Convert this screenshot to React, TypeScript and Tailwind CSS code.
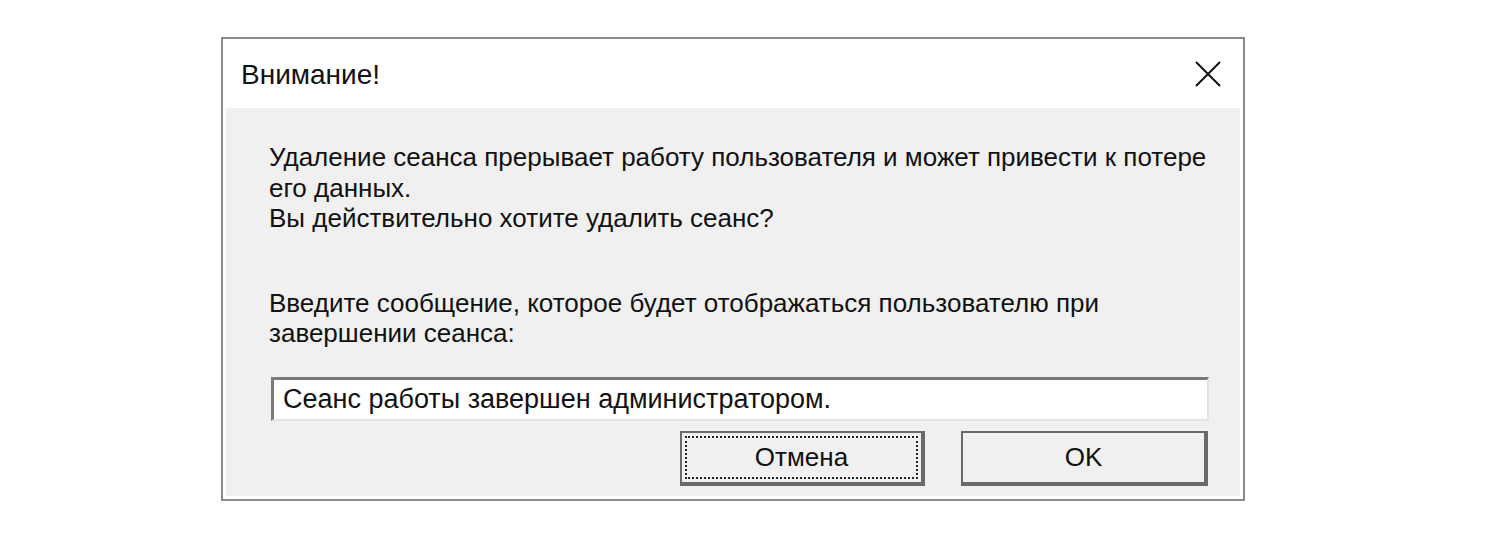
import React from "react";

export default function App() {
  return (
    <div className="w-[1512px] h-[539px] bg-white relative overflow-hidden" style={{ fontFamily: '"Liberation Sans", Arial, sans-serif' }}>
      <div className="absolute left-[221px] top-[37px] w-[1024px] h-[464px] border-2 border-[#8a8a8a] bg-white flex flex-col">
        <div className="h-[69px] flex items-center justify-between pl-[18px] pr-[22px] shrink-0">
          <span className="text-[28px] text-[#111] pt-[2px]">Внимание!</span>
          <svg width="26" height="26" viewBox="0 0 26 26" className="text-[#111]">
            <path d="M1 1 L25 25 M25 1 L1 25" stroke="currentColor" strokeWidth="2" />
          </svg>
        </div>
        <div className="flex-1 mx-[3px] mb-[3px] bg-[#f0f0f0] flex flex-col pl-[43px] pr-[20px] pt-[34px] text-[26px] leading-[30.5px] text-[#111]">
          <p className="whitespace-nowrap">Удаление сеанса прерывает работу пользователя и может привести к потере<br />его данных.<br />Вы действительно хотите удалить сеанс?</p>
          <p className="mt-[54px] whitespace-nowrap">Введите сообщение, которое будет отображаться пользователю при<br />завершении сеанса:</p>
          <div className="mt-[28px] ml-[2px] w-[938px] h-[44px] bg-white border-t-[3px] border-l-[3px] border-b-2 border-r-2 border-t-[#7a7a7a] border-l-[#7a7a7a] border-b-[#e3e3e3] border-r-[#e3e3e3] flex items-center pl-[9px] text-[27px]">
            Сеанс работы завершен администратором.
          </div>
          <div className="mt-[10px] flex justify-end gap-[36px] pr-[12px]">
            <div className="w-[245px] h-[55px] border-t-2 border-l-2 border-r-[4px] border-b-[4px] border-[#6a6a6a] bg-[#f0f0f0] p-[3px]">
              <div className="w-full h-full border-2 border-dotted border-[#222] flex items-center justify-center">Отмена</div>
            </div>
            <div className="w-[247px] h-[55px] border-t-2 border-l-2 border-r-[4px] border-b-[4px] border-[#6a6a6a] bg-[#f0f0f0] flex items-center justify-center">OK</div>
          </div>
        </div>
      </div>
    </div>
  );
}
